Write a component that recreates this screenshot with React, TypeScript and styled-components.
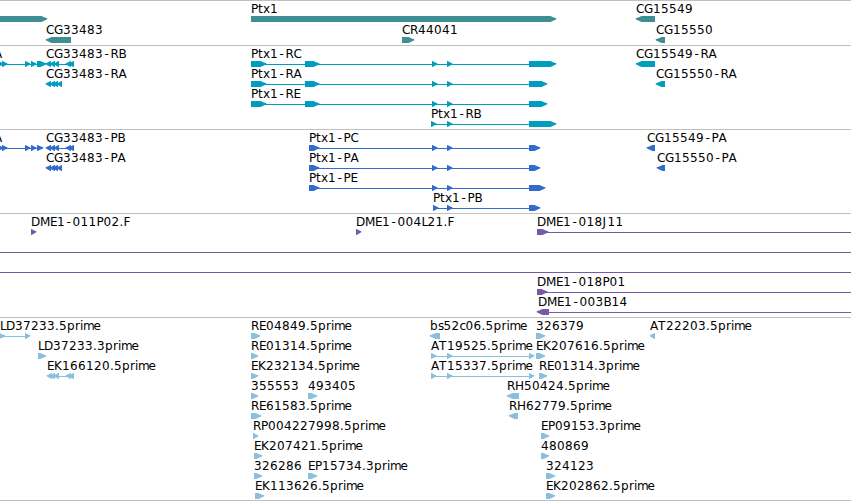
import React from "react";
import styled, { createGlobalStyle } from "styled-components";

const GlobalStyle = createGlobalStyle`
  body {
    margin: 0;
    background: #ffffff;
    overflow: hidden;
  }
`;

type Direction = "right" | "left";

interface Feature {
  label?: string;
  /** Left edge of the label, when it differs from the first block. */
  at?: number;
  dir?: Direction;
  /** [start, end] of each block. */
  blocks: [number, number][];
  /** [start, end] of the connecting line; defaults to the span of the blocks. */
  line?: [number, number];
}

interface TrackData {
  name: string;
  color: string;
  height: number;
  rowHeight: number;
  rows: Feature[][];
}

const WIDTH = 851;

const Browser = styled.main`
  display: flex;
  flex-direction: column;
  width: ${WIDTH}px;
  height: 501px;
  background: #ffffff;
  border-bottom: 1px solid #c0c0c0;
  box-sizing: border-box;
  overflow: hidden;
`;

const Track = styled.section<{ $height: number; $color: string }>`
  display: flex;
  flex-direction: column;
  flex: none;
  box-sizing: border-box;
  height: ${(p) => p.$height}px;
  padding-top: 1px;
  border-top: 1px solid #c0c0c0;
  color: ${(p) => p.$color};
`;

const Row = styled.svg<{ $height: number }>`
  display: block;
  flex: none;
  width: ${WIDTH}px;
  height: ${(p) => p.$height}px;
`;

const Label = styled.text`
  font-family: "DejaVu Sans", sans-serif;
  font-size: 12px;
  fill: #000000;
`;

const Block = styled.path`
  fill: currentColor;
`;

const Connector = styled.rect`
  fill: currentColor;
`;

const ADVANCE: Record<string, number> = {
  C: 8, G: 9, R: 8, P: 7, D: 9, M: 10, E: 7, J: 5, L: 6, F: 7, K: 8,
  H: 9, A: 8, T: 8, B: 8, t: 5, x: 7, p: 8, r: 5, i: 3, m: 10.5, e: 7,
  b: 8, s: 5.5, c: 6, "-": 7.5, ".": 4,
};

function positions(text: string, start: number) {
  let x = start;
  return Array.from(text).map((ch) => {
    const at = ch === "-" ? x + 1.5 : x;
    x += ADVANCE[ch] ?? 8;
    return at;
  });
}

/* A bar with a rounded-off point: full height, a shoulder, then the tip. */
function arrow([start, end]: [number, number], dir: Direction) {
  const w = end - start;
  const s = dir === "right" ? 1 : -1;
  const tail = dir === "right" ? start : end;
  const tip = dir === "right" ? end : start;
  const head = Math.min(5.5, w - 0.5);
  const neck = tip - s * head;
  const shoulder = tip - s * head * 0.4;
  return `M${tail} 14H${neck}L${shoulder} 15.4L${tip + s * 0.3} 16.3V17.2L${shoulder} 18.4L${neck} 20H${tail}Z`;
}

const f = (
  label: string,
  blocks: [number, number][],
  extra: Partial<Feature> = {}
): Feature => ({ label, blocks, ...extra });

const left = { dir: "left" as const };

const smallExons: [number, number][] = [[46, 51], [50, 55], [54, 59], [66, 71], [69, 74]];
const quadExons: [number, number][] = [[46, 51], [50, 55], [53, 58], [57, 62]];
const middle: [number, number][] = [[432, 437], [447, 452]];
const atBlocks: [number, number][] = [[431, 436], [447, 452], [529, 534]];

const tracks: TrackData[] = [
  {
    name: "genes",
    color: "#3f8e93",
    height: 45,
    rowHeight: 21,
    rows: [
      [
        { blocks: [[-10, 47]] },
        f("Ptx1", [[251, 556]]),
        f("CG15549", [[636, 655]], left),
      ],
      [
        f("CG33483", [[46, 71]], left),
        f("CR44041", [[402, 414]]),
        f("CG15550", [[656, 665]], left),
      ],
    ],
  },
  {
    name: "transcripts",
    color: "#009dbf",
    height: 84,
    rowHeight: 20,
    rows: [
      [
        f("A", [[-2, 3], [2, 7], [25, 30], [31, 36], [37, 46]], { at: -6 }),
        f("CG33483-RB", smallExons, left),
        f("Ptx1-RC", [[251, 266], [305, 319], ...middle, [529, 556]]),
        f("CG15549-RA", [[636, 655]], left),
      ],
      [
        f("CG33483-RA", quadExons, left),
        f("Ptx1-RA", [[251, 266], [305, 319], ...middle, [529, 547]]),
        f("CG15550-RA", [[656, 665]], left),
      ],
      [f("Ptx1-RE", [[251, 266], [305, 319], ...middle, [529, 547]])],
      [f("Ptx1-RB", [[431, 436], [447, 452], [529, 556]])],
    ],
  },
  {
    name: "proteins",
    color: "#316bcb",
    height: 84,
    rowHeight: 20,
    rows: [
      [
        f("A", [[-2, 3], [2, 7], [25, 30], [31, 36], [37, 43]], { at: -6 }),
        f("CG33483-PB", smallExons, left),
        f("Ptx1-PC", [[309, 319], ...middle, [529, 540]]),
        f("CG15549-PA", [[647, 655]], left),
      ],
      [
        f("CG33483-PA", quadExons, left),
        f("Ptx1-PA", [[309, 319], ...middle, [529, 540]]),
        f("CG15550-PA", [[657, 665]], left),
      ],
      [f("Ptx1-PE", [[309, 319], ...middle, [529, 545]])],
      [f("Ptx1-PB", [[433, 438], [447, 452], [529, 540]])],
    ],
  },
  {
    name: "clones",
    color: "#7759a8",
    height: 104,
    rowHeight: 20,
    rows: [
      [
        f("DME1-011P02.F", [[31, 36]]),
        f("DME1-004L21.F", [[356, 361]]),
        f("DME1-018J11", [[537, 548]], { line: [537, WIDTH] }),
      ],
      [{ blocks: [], line: [0, WIDTH] }],
      [{ blocks: [], line: [0, WIDTH] }],
      [f("DME1-018P01", [[537, 547]], { line: [537, WIDTH] })],
      [f("DME1-003B14", [[537, 549]], { at: 538, dir: "left", line: [540, WIDTH] })],
    ],
  },
  {
    name: "ests",
    color: "#8bbfdf",
    height: 183,
    rowHeight: 20,
    rows: [
      [
        f("LD37233.5prime", [[-1, 5], [25, 30]], { at: 0 }),
        f("RE04849.5prime", [[251, 260]]),
        f("bs52c06.5prime", [[430, 440]], left),
        f("326379", [[536, 545]]),
        f("AT22203.5prime", [[650, 655]], left),
      ],
      [
        f("LD37233.3prime", [[38, 46]]),
        f("RE01314.5prime", [[251, 258]]),
        f("AT19525.5prime", atBlocks),
        f("EK207616.5prime", [[536, 545]]),
      ],
      [
        f("EK166120.5prime", [[47, 52], [50, 55], [54, 59], [66, 71], [69, 74]], left),
        f("EK232134.5prime", [[251, 258]]),
        f("AT15337.5prime", atBlocks),
        f("RE01314.3prime", [[539, 547]]),
      ],
      [
        f("355553", [[251, 258]]),
        f("493405", [[308, 317]]),
        f("RH50424.5prime", [[507, 519]], left),
      ],
      [f("RE61583.5prime", [[251, 261]]), f("RH62779.5prime", [[509, 518]], left)],
      [f("RP004227998.5prime", [[253, 258]]), f("EP09153.3prime", [[541, 549]])],
      [f("EK207421.5prime", [[254, 262]]), f("480869", [[541, 549]])],
      [
        f("326286", [[254, 262]]),
        f("EP15734.3prime", [[308, 317]]),
        f("324123", [[546, 555]]),
      ],
      [f("EK113626.5prime", [[255, 264]]), f("EK202862.5prime", [[546, 555]])],
    ],
  },
];

function FeatureGlyph({ feature }: { feature: Feature }) {
  const { label, blocks, dir = "right" } = feature;
  const line =
    feature.line ??
    (blocks.length > 1
      ? ([blocks[0][0] + 2, blocks[blocks.length - 1][1] - 2] as [number, number])
      : undefined);
  return (
    <g>
      {label && (
        <Label x={positions(label, feature.at ?? blocks[0][0]).join(" ")} y={11}>
          {label}
        </Label>
      )}
      {line && <Connector x={line[0]} y={17} width={line[1] - line[0]} height={1} />}
      {blocks.map((block, i) => (
        <Block key={i} d={arrow(block, dir)} />
      ))}
    </g>
  );
}

export default function App() {
  return (
    <>
      <GlobalStyle />
      <Browser>
        {tracks.map((track) => (
          <Track key={track.name} $height={track.height} $color={track.color}>
            {track.rows.map((row, i) => (
              <Row key={i} $height={track.rowHeight}>
                {row.map((feature, j) => (
                  <FeatureGlyph key={j} feature={feature} />
                ))}
              </Row>
            ))}
          </Track>
        ))}
      </Browser>
    </>
  );
}
